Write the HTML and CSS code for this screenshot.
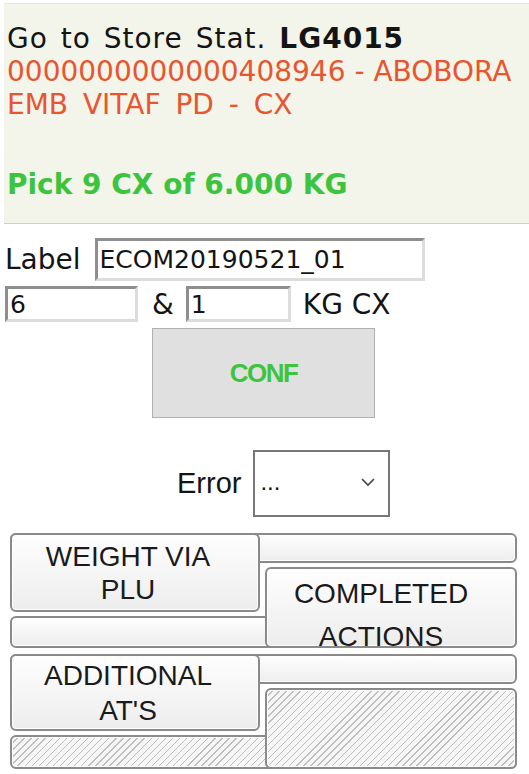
FILE: index.html
```html
<!DOCTYPE html>
<html lang="pt">
<head>
  <meta charset="UTF-8">
  <title>Picking</title>
  <link rel="stylesheet" href="styles.css">
</head>
<body>
  <div class="panel">
    <div class="line stat">Go to Store Stat. <b>LG4015</b></div>
    <div class="line item">0000000000000408946 - ABOBORA <span class="desc">EMB VITAF PD - CX</span></div>
    <div class="line pick">Pick 9 CX of 6.000 KG</div>
  </div>

  <div class="form">
    <div class="row label-row">
      <span class="caption">Label</span>
      <input class="field field-label" type="text" value="ECOM20190521_01">
    </div>
    <div class="row qty-row">
      <input class="field field-qty" type="text" value="6">
      <span class="amp">&amp;</span>
      <input class="field field-weight" type="text" value="1">
      <span class="unit">KG CX</span>
    </div>
    <div class="conf-btn">CONF</div>

    <div class="row error-row">
      <span class="error-caption">Error</span>
      <div class="select">
        <span>...</span>
        <svg width="16" height="10" viewBox="0 0 16 10"><path d="M2 2 L8 8 L14 2" fill="none" stroke="#444" stroke-width="1.6"/></svg>
      </div>
    </div>
  </div>

  <div class="tabs first">
    <div class="tab-back top"></div>
    <div class="tab-back bottom"></div>
    <div class="tab tab-left">WEIGHT VIA<br>PLU</div>
    <div class="tab tab-right">COMPLETED<br>ACTIONS</div>
  </div>

  <div class="tabs second">
    <div class="tab-back top"></div>
    <div class="tab-back bottom hatched"></div>
    <div class="tab tab-left">ADDITIONAL<br>AT'S</div>
    <div class="tab tab-right hatched"></div>
  </div>
</body>
</html>
```

FILE: styles.css
```css
body {
  margin: 0;
  font-family: 'DejaVu Sans', Verdana, sans-serif;
  color: #141414;
  background: #fff;
  width: 529px;
  height: 774px;
  overflow: hidden;
}

.panel {
  margin: 3px 0 0 4px;
  padding: 18px 3px 22px;
  background: #f3f4ea;
  border-top: 1px solid #e6e6de;
  border-bottom: 1px solid #cfcfca;
}

.line {
  font-size: 28px;
  line-height: 33px;
}

.stat {
  letter-spacing: 1px;
  word-spacing: 3px;
}

.item {
  color: #e8552e;
}

.desc {
  word-spacing: 6px;
}

.pick {
  margin-top: 47px;
  color: #3dc43f;
  font-weight: bold;
}

.form {
  padding: 0 5px;
}

.row {
  display: flex;
  align-items: center;
}

.label-row {
  margin-top: 14px;
}

.caption,
.unit,
.amp {
  font-size: 28px;
}

.field {
  box-sizing: border-box;
  font-family: 'DejaVu Sans', Verdana, sans-serif;
  font-size: 25px;
  padding: 0 2px;
  color: #141414;
  background: #fff;
  border: 3px solid;
  border-color: #8e8e8e #dcdcdc #dcdcdc #8e8e8e;
  outline: none;
}

.field-label {
  margin-left: 14px;
  width: 330px;
  height: 43px;
}

.qty-row {
  margin-top: 5px;
}

.field-qty {
  width: 133px;
  height: 36px;
}

.amp {
  margin: 0 12px 0 14px;
}

.field-weight {
  width: 105px;
  height: 36px;
}

.unit {
  margin-left: 12px;
}

.conf-btn {
  box-sizing: border-box;
  margin: 6px 0 0 147px;
  width: 223px;
  height: 90px;
  display: flex;
  align-items: center;
  justify-content: center;
  background: #e0e0e0;
  border: 1px solid #b0b0b0;
  font-family: 'Liberation Sans', Arial, sans-serif;
  font-weight: bold;
  font-size: 26px;
  letter-spacing: -1.5px;
  color: #3dc43f;
}

.error-row {
  margin: 32px 0 0 172px;
}

.error-caption {
  font-family: 'Liberation Sans', Arial, sans-serif;
  font-size: 29px;
  margin-right: 12px;
}

.select {
  box-sizing: border-box;
  width: 137px;
  height: 67px;
  border: 2px solid #777;
  display: flex;
  align-items: center;
  justify-content: space-between;
  padding: 0 12px 4px 5px;
  font-family: 'Liberation Sans', Arial, sans-serif;
  font-size: 24px;
}

.tabs {
  display: grid;
  grid-template-columns: 252px 1fr;
  grid-template-rows: 30px 45px 32px;
  row-gap: 4px;
  margin: 16px 12px 0 10px;
  font-family: 'Liberation Sans', Arial, sans-serif;
  font-size: 28px;
  color: #1a1a1a;
}

.tabs.second {
  grid-template-rows: 30px 43px 34px;
  margin-top: 6px;
}

.tab-back,
.tab {
  box-sizing: border-box;
  border: 2px solid #8a8a8a;
  border-radius: 6px;
  background: linear-gradient(#fefefe, #ededed);
  box-shadow: inset 0 0 0 1px #fff;
}

.tab-back.top {
  grid-area: 1 / 1 / 2 / 3;
}

.tab-back.bottom {
  grid-area: 3 / 1 / 4 / 3;
}

.tab-left {
  grid-area: 1 / 1 / 3 / 2;
  margin-right: 2px;
  display: flex;
  align-items: center;
  justify-content: center;
  padding-right: 14px;
  text-align: center;
  line-height: 33px;
}

.second .tab-left {
  line-height: 35px;
}

.tab-right {
  grid-area: 2 / 2 / 4 / 3;
  margin-left: 3px;
  padding: 3px 20px 0 0;
  text-align: center;
  line-height: 43px;
}

.hatched {
  background: repeating-linear-gradient(135deg, #f6f6f6 0 4px, #bdbdbd 4px 5px);
}
```
